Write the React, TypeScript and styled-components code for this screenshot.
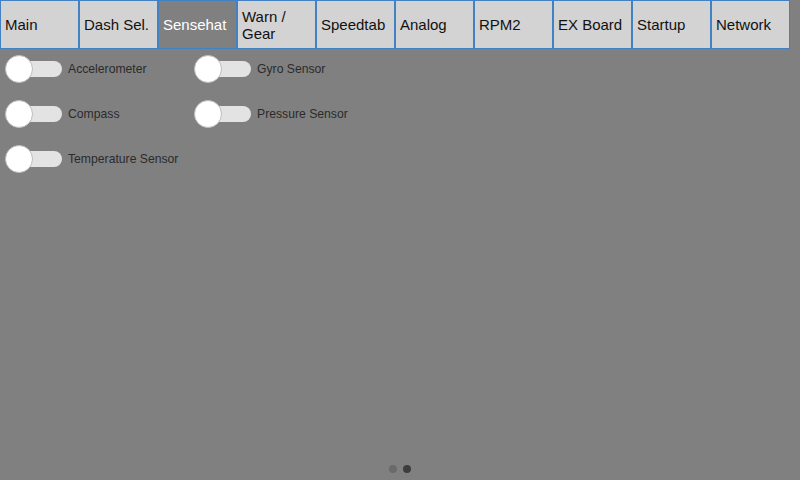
import React from "react";
import styled, { createGlobalStyle } from "styled-components";

const Global = createGlobalStyle`
  html, body { margin: 0; padding: 0; width: 800px; height: 480px; overflow: hidden; background: #808080; }
  * { box-sizing: border-box; }
`;

const Screen = styled.div`
  width: 800px;
  height: 480px;
  background: #808080;
  display: flex;
  flex-direction: column;
  font-family: "Liberation Sans", Arial, sans-serif;
  position: relative;
`;

const TabBar = styled.div`
  display: flex;
  height: 49px;
`;

const Tab = styled.div<{ $active?: boolean }>`
  width: 79px;
  height: 49px;
  border: 1px solid #4282c4;
  background: ${(p) => (p.$active ? "#808080" : "#d3d3d3")};
  color: ${(p) => (p.$active ? "#ffffff" : "#111111")};
  font-size: 15px;
  line-height: 17px;
  padding: 0 4px;
  display: flex;
  align-items: center;
`;

const Content = styled.div`
  flex: 1;
  display: grid;
  grid-template-columns: 189px 189px;
  grid-auto-rows: 45px;
  align-content: start;
  padding: 0 0 0 5px;
`;

const Row = styled.div`
  display: flex;
  align-items: center;
  height: 40px;
`;

const Switch = styled.div`
  position: relative;
  width: 58px;
  height: 28px;
  margin-right: 5px;
  flex: none;
`;

const Track = styled.div`
  position: absolute;
  left: 2px;
  top: 6px;
  width: 55px;
  height: 16px;
  border-radius: 8px;
  background: #e3e3e3;
`;

const Knob = styled.div`
  position: absolute;
  left: 0;
  top: 0;
  width: 28px;
  height: 28px;
  border-radius: 50%;
  background: #ffffff;
  border: 1px solid #bdbdbd;
`;

const Label = styled.span`
  font-size: 12.2px;
  color: #2b2b2b;
`;

const Dots = styled.div`
  position: absolute;
  bottom: 7px;
  left: 0;
  right: 0;
  display: flex;
  justify-content: center;
  gap: 6px;
`;

const Dot = styled.div<{ $active?: boolean }>`
  width: 8px;
  height: 8px;
  border-radius: 50%;
  background: ${(p) => (p.$active ? "#3d3d3d" : "#6a6a6a")};
`;

const tabs = ["Main", "Dash Sel.", "Sensehat", "Warn / Gear", "Speedtab", "Analog", "RPM2", "EX Board", "Startup", "Network"];
const items = ["Accelerometer", "Gyro Sensor", "Compass", "Pressure Sensor", "Temperature Sensor"];

export default function App() {
  return (
    <>
      <Global />
      <Screen>
        <TabBar>
          {tabs.map((t) => (
            <Tab key={t} $active={t === "Sensehat"}>{t}</Tab>
          ))}
        </TabBar>
        <Content>
          {items.map((i) => (
            <Row key={i}>
              <Switch>
                <Track />
                <Knob />
              </Switch>
              <Label>{i}</Label>
            </Row>
          ))}
        </Content>
        <Dots>
          <Dot />
          <Dot $active />
        </Dots>
      </Screen>
    </>
  );
}
